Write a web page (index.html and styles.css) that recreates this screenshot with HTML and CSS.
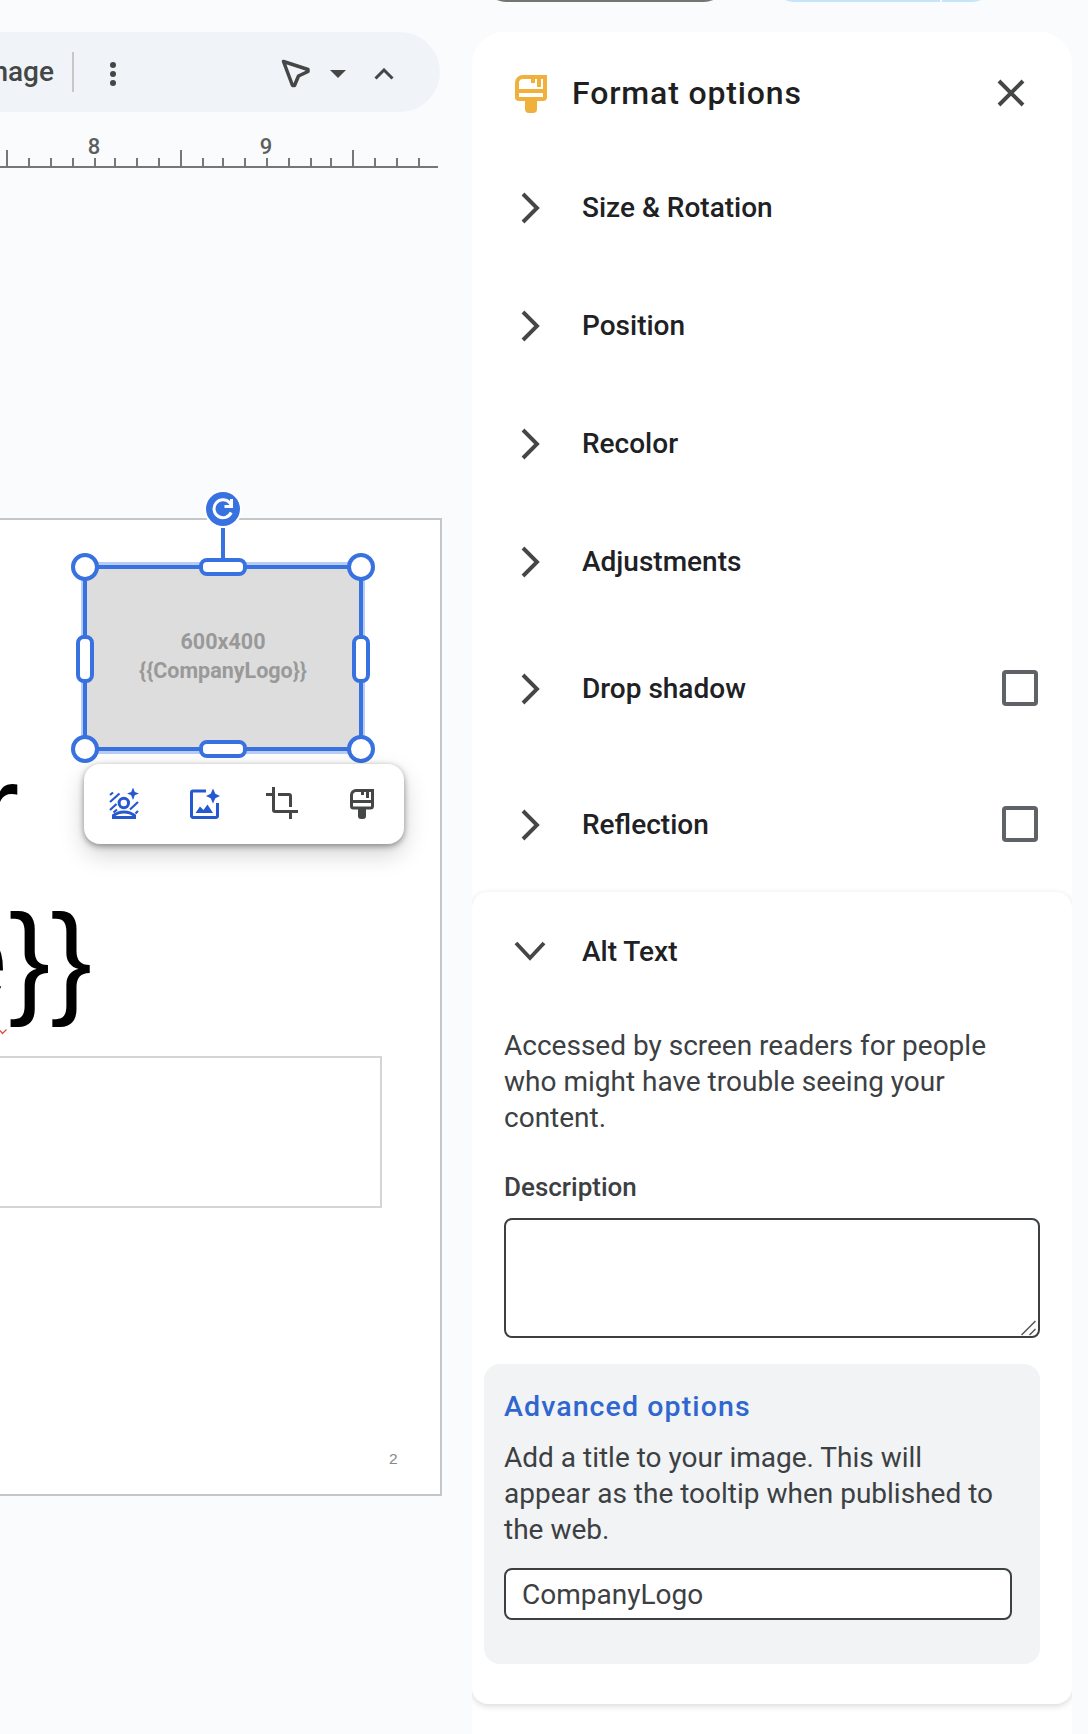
FILE: index.html
```html
<!DOCTYPE html>
<html lang="en">
<head>
<meta charset="utf-8">
<title>Format options</title>
<link rel="stylesheet" href="styles.css">
</head>
<body>
<svg class="defs" width="0" height="0">
  <symbol id="brush" viewBox="0 0 24 30">
    <path fill="none" stroke="currentColor" stroke-width="3" d="M1.500 18V6a4.500 4.500 0 0 1 4.500-4.500h16.500V17a2 2 0 0 1-2 2H3.500a2 2 0 0 1-2-2M1.500 12.500h21M12.500 1v5M17.500 1v8"/>
    <path fill="currentColor" d="M8 19h8v8a3 3 0 0 1-3 3h-2a3 3 0 0 1-3-3z"/>
  </symbol>
</svg>
<div class="app">
  <main class="workspace">
    <div class="toolbar">
      <span class="tool-label">Reset image</span>
      <span class="divider"></span>
      <svg class="dots" width="6" height="24" viewBox="0 0 6 24"><circle cx="3" cy="3" r="3"/><circle cx="3" cy="12" r="3"/><circle cx="3" cy="21" r="3"/></svg>
      <svg class="pointer" width="30" height="30" viewBox="0 0 30 30"><path d="M2.500 2.500 27 10.500V12.500L17.500 17 13.500 26.500H11.500Z"/></svg>
      <svg class="caret" width="16" height="8" viewBox="0 0 16 8"><path d="M0 0h16L8 8z"/></svg>
      <svg class="collapse" width="20" height="12" viewBox="0 0 20 12"><path d="M1.500 10.500 10 2l8.500 8.500"/></svg>
    </div>
    <div class="ruler">
      <svg width="438" height="32" viewBox="0 0 438 32">
        <path class="ticks" d="M0 31H438M7 14V31M181 14V31M353 14V31M29 22V31M51 22V31M73 22V31M95 22V31M115 22V31M137 22V31M159 22V31M203 22V31M223 22V31M245 22V31M267 22V31M289 22V31M311 22V31M331 22V31M375 22V31M397 22V31M419 22V31"/>
        <text x="94" y="18">8</text><text x="266" y="18">9</text>
      </svg>
    </div>
    <section class="slide">
      <div class="slide-title"><span>for</span><span>Name}}</span></div>
      <svg class="squiggle" width="8" height="6" viewBox="0 0 8 6"><path d="M0 1.500 2.500 4.500 6.500.5"/></svg>
      <div class="slide-body"></div>
      <span class="page-number">2</span>
      <div class="placeholder"><span>600x400</span><span>{{CompanyLogo}}</span></div>
      <svg class="selection" width="310" height="280" viewBox="66 490 310 280">
        <rect class="glow" x="82.500" y="563.500" width="281" height="189"/>
        <path class="frame" d="M85 567H361V749H85ZM223 528V567"/>
        <circle class="rotate-ring" cx="223" cy="509" r="19"/>
        <circle class="rotate" cx="223" cy="509" r="17"/>
        <path class="rotate-arrow" d="M231.200 512.500A9 9 0 1 1 229.500 502.500L231 504.500M231.500 499V506.500H224.500"/>
        <g class="handle"><circle cx="85" cy="567" r="12"/><circle cx="361" cy="567" r="12"/><circle cx="85" cy="749" r="12"/><circle cx="361" cy="749" r="12"/>
        <rect x="201" y="560" width="44" height="14" rx="6"/><rect x="201" y="742" width="44" height="14" rx="6"/><rect x="78" y="637" width="14" height="44" rx="6"/><rect x="354" y="637" width="14" height="44" rx="6"/></g>
      </svg>
      <div class="image-tools">
        <svg class="ai" width="32" height="32" viewBox="0 0 32 32">
          <path class="thin" d="M2 7 5 4.500M2 14 11.500 5.500M2 22 8.500 16M5.500 24.500 9 21.500M22 21.500 30 14M27.500 25.500 30 23"/>
          <circle class="portrait" cx="15.800" cy="15" r="4.700"/>
          <path class="portrait" d="M5.500 29.500V27.500Q10 24 16 24T26.500 27.500V29.500Z"/>
          <path class="solid" d="M25-.5 26.800 4 31 5.500 26.800 7.300 25 12 23.200 7.300 19 5.500 23.200 4Z"/>
        </svg>
        <svg class="ai" width="32" height="32" viewBox="0 0 32 32">
          <path class="line" d="M18 3H5a1.500 1.500 0 0 0-1.500 1.500V28A1.500 1.500 0 0 0 5 29.500H28a1.500 1.500 0 0 0 1.500-1.500V15"/>
          <path class="solid" d="M7.500 25 12 18.500 15.500 22 19.500 16.500 25 25ZM25 .5 27.300 5.700 32 8 27.300 10.300 25 15.500 22.700 10.300 18 8 22.700 5.700Z"/>
        </svg>
        <svg class="crop" width="32" height="32" viewBox="0 0 32 32"><path class="line" d="M0 7.500H7.500M7.500 0V23a1.500 1.500 0 0 0 1.500 1.500H32M12 7.500H23a1.500 1.500 0 0 1 1.500 1.500V20M24.500 24V32"/></svg>
        <svg class="brush" width="24" height="30"><use href="#brush"/></svg>
      </div>
    </section>
  </main>
  <div class="side">
    <div class="top-pills"><span class="pill dark"></span><span class="pill share"></span><span class="pill share-more"></span></div>
    <aside class="panel">
      <header class="panel-header">
        <svg class="header-brush" width="32" height="38" viewBox="0 0 32 38">
          <path fill="none" stroke="currentColor" stroke-width="4" d="M2 23V8a6 6 0 0 1 6-6H30V22a2 2 0 0 1-2 2H4a2 2 0 0 1-2-2M2 16H30M18 2V8M24 2V12"/>
          <path fill="currentColor" d="M10 24h12v10a4 4 0 0 1-4 4h-4a4 4 0 0 1-4-4z"/>
        </svg>
        <h1>Format options</h1>
        <svg class="close" width="28" height="28" viewBox="0 0 28 28"><path d="M2 2 26 26M26 2 2 26"/></svg>
      </header>
      <div class="row"><svg class="chevron" width="20" height="32" viewBox="0 0 20 32"><path d="M2 2 16 16 2 30"/></svg><h2>Size &amp; Rotation</h2></div>
      <div class="row"><svg class="chevron" width="20" height="32" viewBox="0 0 20 32"><path d="M2 2 16 16 2 30"/></svg><h2>Position</h2></div>
      <div class="row"><svg class="chevron" width="20" height="32" viewBox="0 0 20 32"><path d="M2 2 16 16 2 30"/></svg><h2>Recolor</h2></div>
      <div class="row"><svg class="chevron" width="20" height="32" viewBox="0 0 20 32"><path d="M2 2 16 16 2 30"/></svg><h2>Adjustments</h2></div>
      <div class="row tall"><svg class="chevron" width="20" height="32" viewBox="0 0 20 32"><path d="M2 2 16 16 2 30"/></svg><h2>Drop shadow</h2><span class="checkbox"></span></div>
      <div class="row tall"><svg class="chevron" width="20" height="32" viewBox="0 0 20 32"><path d="M2 2 16 16 2 30"/></svg><h2>Reflection</h2><span class="checkbox"></span></div>
      <section class="alt-card">
        <div class="row alt-row"><svg class="chevron down" width="32" height="20" viewBox="0 0 32 20"><path d="M2 2 16 17 30 2"/></svg><h2>Alt Text</h2></div>
        <p class="help">Accessed by screen readers for people<br>who might have trouble seeing your<br>content.</p>
        <label class="field-label">Description</label>
        <div class="textarea"><svg width="15" height="16" viewBox="0 0 15 16"><path d="M.5 15 14.500 1M8.500 15 14.500 9"/></svg></div>
        <div class="advanced">
          <h3>Advanced options</h3>
          <p>Add a title to your image. This will<br>appear as the tooltip when published to<br>the web.</p>
          <div class="input">CompanyLogo</div>
        </div>
      </section>
    </aside>
  </div>
</div>
</body>
</html>
```

FILE: styles.css
```css
* { box-sizing: border-box; }
body { margin: 0; background: #fafbfd; font-family: Roboto, "Liberation Sans", sans-serif; color: #202124; }
h1, h2, h3, p { margin: 0; font-weight: 500; white-space: nowrap; }
svg { display: block; flex: none; }
.defs { position: absolute; }
.app { display: flex; width: 1088px; height: 1734px; overflow: hidden; }

.workspace { width: 472px; padding-top: 32px; overflow: hidden; }
.toolbar { display: flex; align-items: center; width: 440px; height: 80px; border-radius: 0 40px 40px 0; background: #f0f4f9; color: #444746; }
.tool-label { display: flex; justify-content: flex-end; width: 54px; margin: 0 18px 2px 0; font-size: 28px; font-weight: 500; white-space: nowrap; }
.divider { width: 2px; height: 40px; background: #c7c7c7; }
.dots { margin: 4px 0 0 36px; fill: #444746; }
.pointer { margin: 4px 0 0 165px; fill: none; stroke: #444746; stroke-width: 3.500; stroke-linejoin: round; }
.caret { margin: 4px 0 0 19px; fill: #444746; }
.collapse { margin: 4px 0 0 28px; fill: none; stroke: #444746; stroke-width: 3; }
.ruler { height: 56px; padding-top: 24px; }
.ruler svg { overflow: visible; }
.ticks { stroke: #747775; stroke-width: 2; }
.ruler text { font-size: 22px; font-weight: 500; fill: #5c5f5e; text-anchor: middle; }

.slide { position: relative; width: 442px; height: 978px; margin-top: 350px; background: #fff; border: solid #c4c7c5; border-width: 2px 2px 2px 0; }
.slide-title { position: absolute; top: 213px; left: -400px; width: 492px; display: flex; flex-direction: column; align-items: flex-end; font-family: "Liberation Sans", sans-serif; font-size: 125px; line-height: 150px; color: #000; }
.slide-title span:first-child { margin-right: 72.500px; }
.squiggle { position: absolute; left: 0; top: 509px; fill: none; stroke: #e0483e; stroke-width: 1.200; }
.slide-body { position: absolute; left: 0; top: 536px; width: 382px; height: 152px; border: solid #d5d5d5; border-width: 2px 2px 2px 0; }
.page-number { position: absolute; left: 389px; top: 930px; font: 15.500px "Liberation Sans", sans-serif; color: #888; }
.placeholder { position: absolute; left: 85px; top: 47px; width: 276px; height: 182px; padding-bottom: 4px; display: flex; flex-direction: column; align-items: center; justify-content: center; background: #ddd; color: #999; font-size: 21.500px; line-height: 29px; font-weight: 700; }
.selection { position: absolute; left: 66px; top: -30px; }
.glow { fill: none; stroke: #b9cdf4; stroke-width: 3; }
.frame { fill: none; stroke: #3871e0; stroke-width: 4; }
.rotate-ring { fill: #fff; }
.rotate { fill: #3871e0; }
.rotate-arrow { fill: none; stroke: #fff; stroke-width: 3; }
.handle { fill: #fff; stroke: #3871e0; stroke-width: 4; }
.image-tools { position: absolute; left: 84px; top: 244px; width: 320px; height: 80px; display: flex; align-items: center; gap: 48px; padding-left: 24px; border-radius: 16px; background: #fff; color: #444746; box-shadow: 0 2px 6px rgba(0,0,0,.4), 0 10px 24px rgba(0,0,0,.18); }
.image-tools .crop { margin: 0 0 2px -2px; }
.image-tools .brush { margin-left: 4px; }
.line, .portrait { fill: none; stroke: currentColor; stroke-width: 3; }
.thin { fill: none; stroke: currentColor; stroke-width: 2.200; }
.solid { fill: currentColor; }
.ai { color: #2658cf; }

.side { width: 616px; }
.top-pills { display: flex; height: 32px; padding-left: 12px; }
.pill { height: 44px; margin-top: -42px; border-radius: 22px; }
.dark { width: 242px; background: #747470; }
.share { width: 168px; margin-left: 46px; border-radius: 22px 0 0 22px; background: #c5e5fb; }
.share-more { width: 52px; margin-left: 2px; border-radius: 0 22px 22px 0; background: #c5e5fb; }
.panel { width: 600px; height: 1740px; background: #fff; border-radius: 32px 32px 0 0; overflow: hidden; }
.panel-header { display: flex; align-items: center; height: 116px; color: #efb03c; }
.header-brush { margin: 8px 0 0 43px; }
.panel-header h1 { width: 423px; margin: 5px 0 0 25px; font-size: 32px; letter-spacing: .85px; color: #1f1f1f; }
.close { margin: 6px 0 0 2px; fill: none; stroke: #444746; stroke-width: 4; }
.row { display: flex; align-items: center; height: 118px; padding-left: 49px; }
.row h2 { width: 420px; margin-left: 41px; font-size: 28px; }
.tall { height: 136px; }
.chevron { margin-top: 1px; fill: none; stroke: #444746; stroke-width: 3.900; }
.down { margin-top: -1px; }
.checkbox { width: 36px; height: 36px; border: 4px solid #5f6368; border-radius: 4px; }
.alt-card { height: 812px; padding: 4px 32px 0 12px; border-radius: 16px; background: #fff; box-shadow: 0 2px 6px rgba(60,64,67,.2); }
.alt-row { height: 111px; padding-left: 30px; }
.alt-row h2 { margin-left: 36px; }
.help, .advanced p { font-size: 28px; font-weight: 400; line-height: 36px; color: #3c4043; }
.help { margin: 21px 0 31px 20px; }
.field-label { display: block; height: 51px; margin-left: 20px; font-size: 26px; line-height: 40px; font-weight: 500; color: #3c4043; }
.textarea { display: flex; align-items: flex-end; justify-content: flex-end; height: 120px; margin-left: 20px; padding: 2px 2px 0; border: 2px solid #3c4043; border-radius: 8px; }
.textarea path { fill: none; stroke: #555; stroke-width: 1.500; }
.advanced { height: 300px; margin-top: 26px; padding: 24px 28px 0 20px; border-radius: 16px; background: #f1f3f4; }
.advanced h3 { height: 52px; font-size: 28.500px; line-height: 37px; letter-spacing: 1.100px; color: #2f66cf; }
.advanced p { margin-bottom: 20px; }
.input { height: 52px; padding-left: 16px; border: 2px solid #3c4043; border-radius: 8px; background: #fff; color: #3c4043; font-size: 28px; line-height: 49px; }
```
